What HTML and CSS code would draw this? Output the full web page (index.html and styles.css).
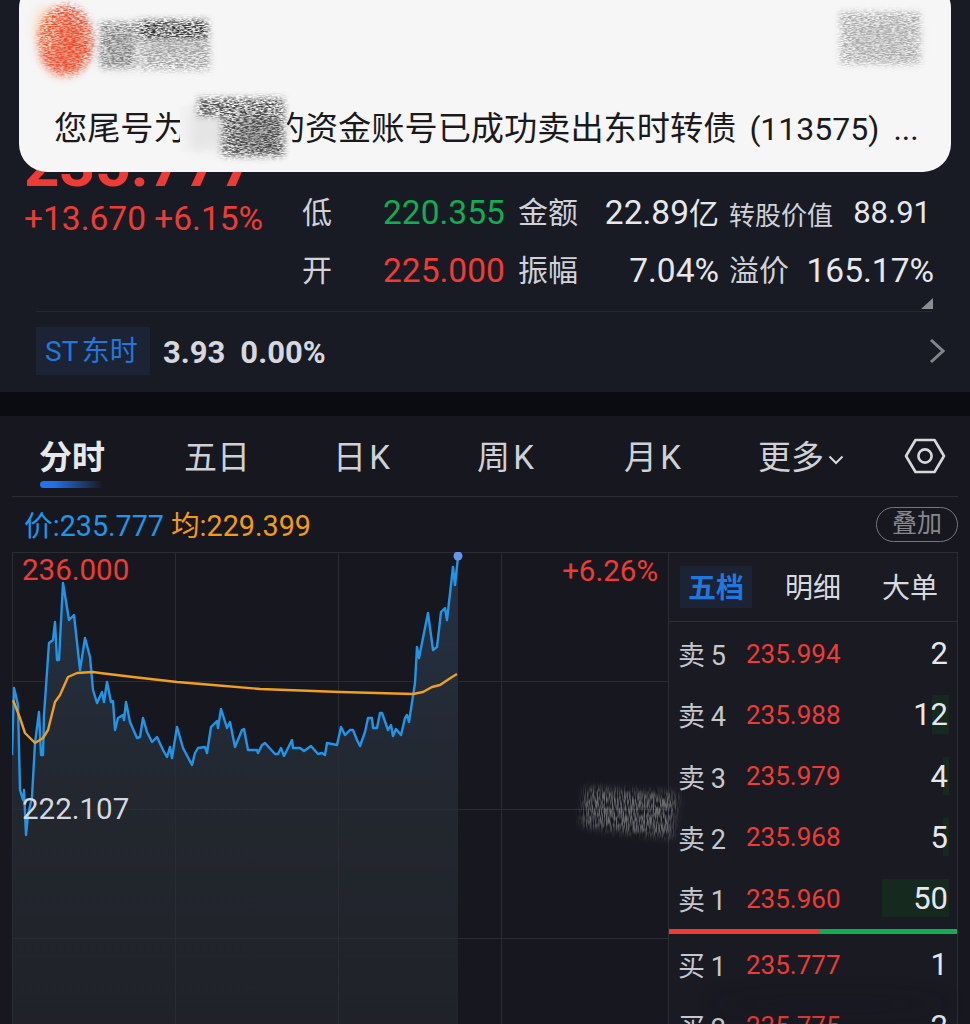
FILE: index.html
```html
<!DOCTYPE html>
<html lang="zh-CN">
  <head>
    <meta charset="UTF-8" />
    <meta name="viewport" content="width=device-width, initial-scale=1.0" />
    <title>东时转债</title>
    <link rel="stylesheet" href="styles.css">
  </head>
  <body>
    <div class="page">
      <!-- quote header -->
      <section class="quote">
        <div class="quote-top">
          <div class="price-col">
            <div class="price">235.777</div>
            <div class="change">+13.670 +6.15%</div>
          </div>
          <div class="stats">
            <span class="stat-label">低</span>
            <span class="stat-num green">220.355</span>
            <span class="stat-label">金额</span>
            <span class="stat-num right">22.89<span class="stat-unit">亿</span></span>
            <span class="stat-wide"><span class="small-label">转股价值</span><span class="stat-num stat-small">88.91</span></span>
            <span class="stat-label">开</span>
            <span class="stat-num red">225.000</span>
            <span class="stat-label">振幅</span>
            <span class="stat-num right">7.04%</span>
            <span class="stat-wide"><span class="stat-label">溢价</span><span class="stat-num">165.17%</span></span>
          </div>
        </div>
        <div class="corner-mark"></div>
        <div class="quote-line"></div>
        <div class="linked">
          <span class="linked-name">ST 东时</span>
          <span class="linked-num">3.93</span>
          <span class="linked-num">0.00%</span>
          <svg class="linked-arrow" width="16" height="26" viewBox="0 0 16 26">
            <path d="M2 2 L14 13 L2 24" fill="none" stroke="#83858b" stroke-width="3" />
          </svg>
        </div>
      </section>

      <section class="market">
        <nav class="tabs">
          <span class="tab tab-on">分时</span>
          <span class="tab">五日</span>
          <span class="tab">日 K</span>
          <span class="tab">周 K</span>
          <span class="tab">月 K</span>
          <span class="tab tab-more">更多<svg width="16" height="10" viewBox="0 0 16 10"><path d="M1.5 1.5 L8 8 L14.5 1.5" fill="none" stroke="#d6d8dc" stroke-width="2" /></svg></span>
          <svg class="tab-gear" width="42" height="36" viewBox="0 0 42 36">
            <path d="M2 18 L11.5 2 H30.5 L40 18 L30.5 34 H11.5 Z" fill="none" stroke="#d6d8dc" stroke-width="2.6" stroke-linejoin="round" />
            <circle cx="21" cy="18" r="6.6" fill="none" stroke="#d6d8dc" stroke-width="2.6" />
          </svg>
        </nav>

        <div class="legend">
          <span class="legend-val blue">价:235.777</span>
          <span class="legend-val orange">均:229.399</span>
          <span class="overlay-btn">叠加</span>
        </div>

        <div class="panels">
          <div class="chart">
            <svg class="chart-svg" width="656" height="472" viewBox="12 552 656 472">
              <defs>
                <linearGradient id="areaFill" x1="0" y1="0" x2="0" y2="1">
                  <stop offset="0" stop-color="#2a3d55" stop-opacity="0.7" />
                  <stop offset="0.55" stop-color="#2a3038" stop-opacity="0.6" />
                  <stop offset="1" stop-color="#24262d" stop-opacity="0.7" />
                </linearGradient>
              </defs>
              <path fill="url(#areaFill)" d="M12 755 L14 688 18 705 20 790 23 800 24 790 26 835 28 815 32 797 35 743 39 712 41 755 43 755 44 715 49 643 53 640 55 622 57 660 59 660 63 583 69 620 74 615 80 670 85 638 90 657 93 690 97 703 102 692 104 702 107 682 111 702 113 701 115 730 118 718 123 715 124 720 126 702 130 722 137 738 140 737 143 718 147 732 152 742 157 737 163 750 167 757 170 747 172 758 177 727 183 748 192 765 195 753 198 748 205 747 207 753 211 727 217 721 218 728 221 709 227 728 230 722 235 747 242 730 244 729 248 750 257 750 258 753 262 745 265 743 275 754 278 754 281 748 284 756 292 740 293 748 300 748 304 751 311 746 318 754 322 753 325 755 327 743 337 745 341 727 345 735 350 730 353 730 357 740 360 746 365 732 368 718 372 718 373 728 377 728 380 713 382 713 388 730 391 725 393 736 396 729 401 735 405 718 407 715 409 722 415 683 417 647 419 658 428 613 433 650 437 647 441 612 445 608 447 620 453 567 455 585 458 557 V1024 H12 Z" />
              <g class="grid-lines">
                <path d="M12 552.5 H668 M12 681.5 H668 M12 809.5 H668 M12 938.5 H668" />
                <path d="M12.5 552 V1024 M175.5 552 V1024 M338.5 552 V1024 M501.5 552 V1024" />
              </g>
              <polyline class="line-price" points="12,755 14,688 18,705 20,790 23,800 24,790 26,835 28,815 32,797 35,743 39,712 41,755 43,755 44,715 49,643 53,640 55,622 57,660 59,660 63,583 69,620 74,615 80,670 85,638 90,657 93,690 97,703 102,692 104,702 107,682 111,702 113,701 115,730 118,718 123,715 124,720 126,702 130,722 137,738 140,737 143,718 147,732 152,742 157,737 163,750 167,757 170,747 172,758 177,727 183,748 192,765 195,753 198,748 205,747 207,753 211,727 217,721 218,728 221,709 227,728 230,722 235,747 242,730 244,729 248,750 257,750 258,753 262,745 265,743 275,754 278,754 281,748 284,756 292,740 293,748 300,748 304,751 311,746 318,754 322,753 325,755 327,743 337,745 341,727 345,735 350,730 353,730 357,740 360,746 365,732 368,718 372,718 373,728 377,728 380,713 382,713 388,730 391,725 393,736 396,729 401,735 405,718 407,715 409,722 415,683 417,647 419,658 428,613 433,650 437,647 441,612 445,608 447,620 453,567 455,585 458,557" />
              <polyline class="line-avg" points="13,700 20,718 25,733 35,743 43,738 48,730 55,702 60,695 68,677 77,673 93,672 100,673 133,677 177,682 213,685 260,689 340,692 413,694 423,692 432,687 440,685 452,677 457,674" />
              <circle cx="458" cy="556" r="4.5" fill="#6a93ee" />
            </svg>
            <span class="axis axis-high">236.000</span>
            <span class="axis axis-low">222.107</span>
            <span class="axis axis-pct">+6.26%</span>
          </div>

          <div class="book">
            <div class="book-tabs">
              <span class="book-tab book-tab-on">五档</span>
              <span class="book-tab book-tab-mid">明细</span>
              <span class="book-tab book-tab-end">大单</span>
            </div>
            <div class="book-row"><span class="book-name">卖 5</span><span class="book-price">235.994</span><span class="book-qty">2</span></div>
            <div class="book-row"><span class="book-bar" style="width:17px"></span><span class="book-name">卖 4</span><span class="book-price">235.988</span><span class="book-qty">12</span></div>
            <div class="book-row"><span class="book-bar" style="width:6px"></span><span class="book-name">卖 3</span><span class="book-price">235.979</span><span class="book-qty">4</span></div>
            <div class="book-row"><span class="book-bar" style="width:6px"></span><span class="book-name">卖 2</span><span class="book-price">235.968</span><span class="book-qty">5</span></div>
            <div class="book-row"><span class="book-bar" style="width:67px"></span><span class="book-name">卖 1</span><span class="book-price">235.960</span><span class="book-qty">50</span></div>
            <div class="split"><span class="split-red"></span><span class="split-green"></span></div>
            <div class="book-row"><span class="book-name">买 1</span><span class="book-price">235.777</span><span class="book-qty">1</span></div>
            <div class="book-row"><span class="book-name">买 2</span><span class="book-price">235.775</span><span class="book-qty">2</span></div>
          </div>
        </div>
      </section>

      <!-- notification on top of the quote -->
      <div class="toast">
        <div class="toast-text">您尾号为<span class="toast-gap"></span>的资金账号已成功卖出东时转债<span class="toast-code">(113575)</span><span class="toast-more">...</span></div>
      </div>

      <!-- pencil marks that hide private details -->
      <svg class="scribbles" width="970" height="1024" viewBox="0 0 970 1024">
        <defs>
          <filter id="pencil" x="-20%" y="-20%" width="140%" height="140%">
            <feGaussianBlur in="SourceGraphic" stdDeviation="3" result="soft" />
            <feTurbulence type="fractalNoise" baseFrequency="0.25 1.1" numOctaves="2" seed="4" result="noise" />
            <feColorMatrix in="noise" type="matrix" values="0 0 0 0 0  0 0 0 0 0  0 0 0 0 0  0 0 0 3 -1" result="grain" />
            <feComposite in="soft" in2="grain" operator="in" />
            <feGaussianBlur stdDeviation="0.4" />
          </filter>
          <filter id="pencilUp" x="-20%" y="-20%" width="140%" height="140%">
            <feGaussianBlur in="SourceGraphic" stdDeviation="4" result="soft" />
            <feTurbulence type="fractalNoise" baseFrequency="0.9 0.12" numOctaves="2" seed="9" result="noise" />
            <feColorMatrix in="noise" type="matrix" values="0 0 0 0 0  0 0 0 0 0  0 0 0 0 0  0 0 0 3 -1" result="grain" />
            <feComposite in="soft" in2="grain" operator="in" />
            <feGaussianBlur stdDeviation="0.5" />
          </filter>
          <filter id="soft" x="-30%" y="-30%" width="160%" height="160%"><feGaussianBlur stdDeviation="6" /></filter>
          <filter id="softer" x="-30%" y="-200%" width="160%" height="500%"><feGaussianBlur stdDeviation="10" /></filter>
        </defs>
        <rect x="180" y="106" width="24" height="46" fill="#f3f3f4" />
        <rect x="272" y="106" width="15" height="46" fill="#f1f1f2" />
        <g filter="url(#soft)" opacity="0.75">
          <ellipse cx="64" cy="44" rx="24" ry="30" fill="#ee7a5c" />
          <ellipse cx="46" cy="28" rx="12" ry="22" fill="#f8d8b4" />
          <rect x="104" y="28" width="30" height="38" fill="#c4c4c4" />
          <rect x="144" y="30" width="60" height="28" fill="#d4d4d4" />
          <rect x="850" y="20" width="66" height="40" fill="#dcdcdc" />
          <rect x="190" y="108" width="40" height="42" fill="#e0e0e0" />
          <rect x="236" y="116" width="42" height="36" fill="#a0a0a0" />
        </g>
        <g filter="url(#pencil)">
          <ellipse cx="66" cy="40" rx="28" ry="36" fill="#e8401e" opacity="0.85" />
          <rect x="100" y="22" width="36" height="46" fill="#808080" />
          <rect x="138" y="20" width="70" height="20" fill="#333" />
          <rect x="140" y="42" width="70" height="28" fill="#a0a0a0" />
          <rect x="840" y="12" width="80" height="52" fill="#aaaaaa" />
          <rect x="198" y="98" width="86" height="18" fill="#4a4a4a" />
          <rect x="222" y="116" width="62" height="40" fill="#4a4a4a" />
        </g>
        <polygon points="585,788 678,794 672,838 582,826" fill="#b0b0b0" opacity="0.55" filter="url(#pencilUp)" />
        <ellipse cx="830" cy="1004" rx="120" ry="9" fill="#15161b" opacity="0.3" filter="url(#softer)" />
      </svg>
    </div>
  </body>
</html>
```

FILE: styles.css
```css
html,
body {
  margin: 0;
  background-color: #0b0c11;
}

body {
  font-family: "Roboto", "Noto Sans CJK SC", sans-serif;
  color: #d8dadf;
}

.page {
  position: relative;
  width: 970px;
  height: 1024px;
  overflow: hidden;
}

.red {
  color: #ef3b36;
}

.green {
  color: #12ac52;
}

.blue {
  color: #2196e8;
}

.orange {
  color: #f39c12;
}

/* quote header */
.quote {
  position: relative;
  height: 392px;
  background-color: #191b24;
}

.quote-top {
  display: flex;
  height: 300px;
  box-sizing: border-box;
  padding: 134px 0 0 24px;
}

.price-col {
  width: 278px;
}

.price {
  font-size: 62px;
  line-height: 62px;
  font-weight: 700;
  color: #ef3b36;
}

.change {
  margin-top: 3px;
  font-size: 33.5px;
  line-height: 40px;
  font-weight: 450;
  color: #ef3b36;
  white-space: nowrap;
}

.stats {
  display: grid;
  grid-template-columns: 81px 135px 60px 141px 215px;
  grid-auto-rows: 58px;
  align-items: center;
  margin-top: 50px;
  height: 116px;
}

.stat-label {
  font-size: 30px;
  line-height: 58px;
  color: #d0d2d7;
}

.small-label {
  font-size: 26px;
  color: #d0d2d7;
}

.stat-num {
  font-size: 33.5px;
  line-height: 58px;
  font-weight: 450;
  color: #e6e8ec;
  white-space: nowrap;
}

.stat-num.green {
  color: #12ac52;
}

.stat-num.red {
  color: #ef3b36;
}

.stat-small {
  font-size: 31px;
  padding-right: 3px;
}

.stat-unit {
  font-size: 30px;
  font-weight: 400;
}

.right {
  text-align: right;
}

.stat-wide {
  display: flex;
  justify-content: space-between;
  align-items: center;
  width: 205px;
  margin-left: 10px;
}

.corner-mark {
  position: absolute;
  left: 921px;
  top: 298px;
  width: 0;
  height: 0;
  border-left: 12px solid transparent;
  border-bottom: 11px solid #8c8e93;
}

.quote-line {
  height: 1px;
  margin: 11px 38px 0 36px;
  background-color: #262830;
}

.linked {
  display: flex;
  align-items: center;
  height: 48px;
  margin: 15px 25px 0 36px;
}

.linked-name {
  width: 114px;
  height: 48px;
  box-sizing: border-box;
  padding-left: 9px;
  font-size: 28px;
  line-height: 49px;
  word-spacing: -3px;
  background-color: #1b2334;
  color: #2277dd;
}

.linked-num {
  margin-left: 13px;
  padding-top: 2px;
  font-size: 31px;
  font-weight: 700;
  color: #d6d8dd;
}

.linked-num + .linked-num {
  margin-left: 15px;
}

.linked-arrow {
  margin-left: auto;
}

/* tabs, legend, chart, order book */
.market {
  position: relative;
  height: 608px;
  margin-top: 24px;
  background-color: #17181f;
}

.tabs {
  display: grid;
  grid-template-columns: 145px 149px 144px 147px 134px 146px 42px;
  align-items: center;
  height: 81px;
  box-sizing: border-box;
  margin: 0 12px;
  padding-left: 27px;
  border-bottom: 1px solid #2c2e36;
}

.tab {
  position: relative;
  top: 2px;
  font-size: 33px;
  line-height: 80px;
  word-spacing: -5px;
  color: #cfd1d6;
  white-space: nowrap;
}

.tab-on {
  font-weight: 700;
  color: #e6e8ec;
}

.tab-on::after {
  content: "";
  position: absolute;
  left: 1px;
  top: 63px;
  width: 63px;
  height: 7px;
  border-radius: 4px;
  background: linear-gradient(90deg, #2272ee, #2272ee 20%, rgba(34, 114, 238, 0));
}

.tab-more svg {
  margin-left: 4px;
  vertical-align: 4px;
}

.legend {
  display: flex;
  align-items: center;
  gap: 7px;
  height: 55px;
  margin: 0 12px;
  padding-left: 12px;
  font-size: 28.7px;
}

.legend-val {
  padding-bottom: 3px;
}

.overlay-btn {
  margin-left: auto;
  width: 82px;
  height: 35px;
  box-sizing: border-box;
  border: 1px solid #75777d;
  border-radius: 18px;
  text-align: center;
  font-size: 25px;
  line-height: 32px;
  color: #85878c;
}

.panels {
  display: flex;
  margin: 0 12px;
}

.chart {
  position: relative;
  width: 656px;
  height: 472px;
}

.chart-svg {
  display: block;
}

.grid-lines path {
  fill: none;
  stroke: #2a2c33;
  stroke-width: 1;
}

.line-price {
  fill: none;
  stroke: #2196e8;
  stroke-width: 2.4;
  stroke-linejoin: round;
}

.line-avg {
  fill: none;
  stroke: #f0a020;
  stroke-width: 2.4;
  stroke-linejoin: round;
}

.axis {
  position: absolute;
  font-size: 29.5px;
  line-height: 34px;
}

.axis-high {
  left: 10px;
  top: 1px;
  color: #ef3b36;
}

.axis-low {
  left: 10px;
  top: 240px;
  color: #d5d8de;
}

.axis-pct {
  right: 10px;
  top: 2px;
  color: #ef3b36;
}

.book {
  width: 290px;
  height: 472px;
  box-sizing: border-box;
  border: 1px solid #2c2e36;
  border-bottom: none;
  overflow: hidden;
  background-color: #191a22;
}

.book-tabs {
  display: flex;
  align-items: center;
  height: 69px;
  box-sizing: border-box;
  margin-bottom: 1px;
  padding: 0 19px 0 11px;
  border-bottom: 1px solid #2c2e36;
}

.book-tab {
  height: 42px;
  text-align: center;
  font-size: 28px;
  line-height: 46px;
  color: #d8dadf;
}

.book-tab-on {
  width: 72px;
  background-color: #1b2334;
  font-weight: 700;
  color: #2277dd;
}

.book-tab-mid {
  margin-left: 33px;
}

.book-tab-end {
  margin-left: auto;
}

.book-row {
  position: relative;
  display: flex;
  align-items: center;
  height: 61.25px;
  padding: 0 9px 0 9px;
}

.book-bar {
  position: absolute;
  right: 8px;
  top: 11px;
  bottom: 12px;
  background-color: #16291f;
}

.book-name {
  position: relative;
  width: 68px;
  font-size: 27px;
  word-spacing: -1px;
  color: #c6c8cd;
  white-space: nowrap;
}

.book-price {
  position: relative;
  font-size: 26px;
  font-weight: 450;
  color: #ef3b36;
}

.book-qty {
  position: relative;
  margin-left: auto;
  font-size: 31px;
  color: #e6e8ec;
}

.split {
  display: flex;
  height: 5px;
}

.split-red {
  width: 151px;
  background-color: #ef3b36;
}

.split-green {
  flex: 1;
  background-color: #12ac52;
}

/* notification */
.toast {
  position: absolute;
  left: 19px;
  top: -20px;
  width: 932px;
  height: 192px;
  box-sizing: border-box;
  padding: 126px 0 0 35px;
  border-radius: 28px;
  background-color: #f6f6f7;
}

.toast-text {
  font-size: 33.2px;
  line-height: 46px;
  color: #1a1a1c;
  white-space: nowrap;
}

.toast-gap {
  display: inline-block;
  width: 85px;
}

.toast-code {
  margin-left: 13px;
  font-size: 32px;
}

.toast-more {
  margin-left: 14px;
  font-size: 32px;
}

.scribbles {
  position: absolute;
  left: 0;
  top: 0;
  pointer-events: none;
}
```
